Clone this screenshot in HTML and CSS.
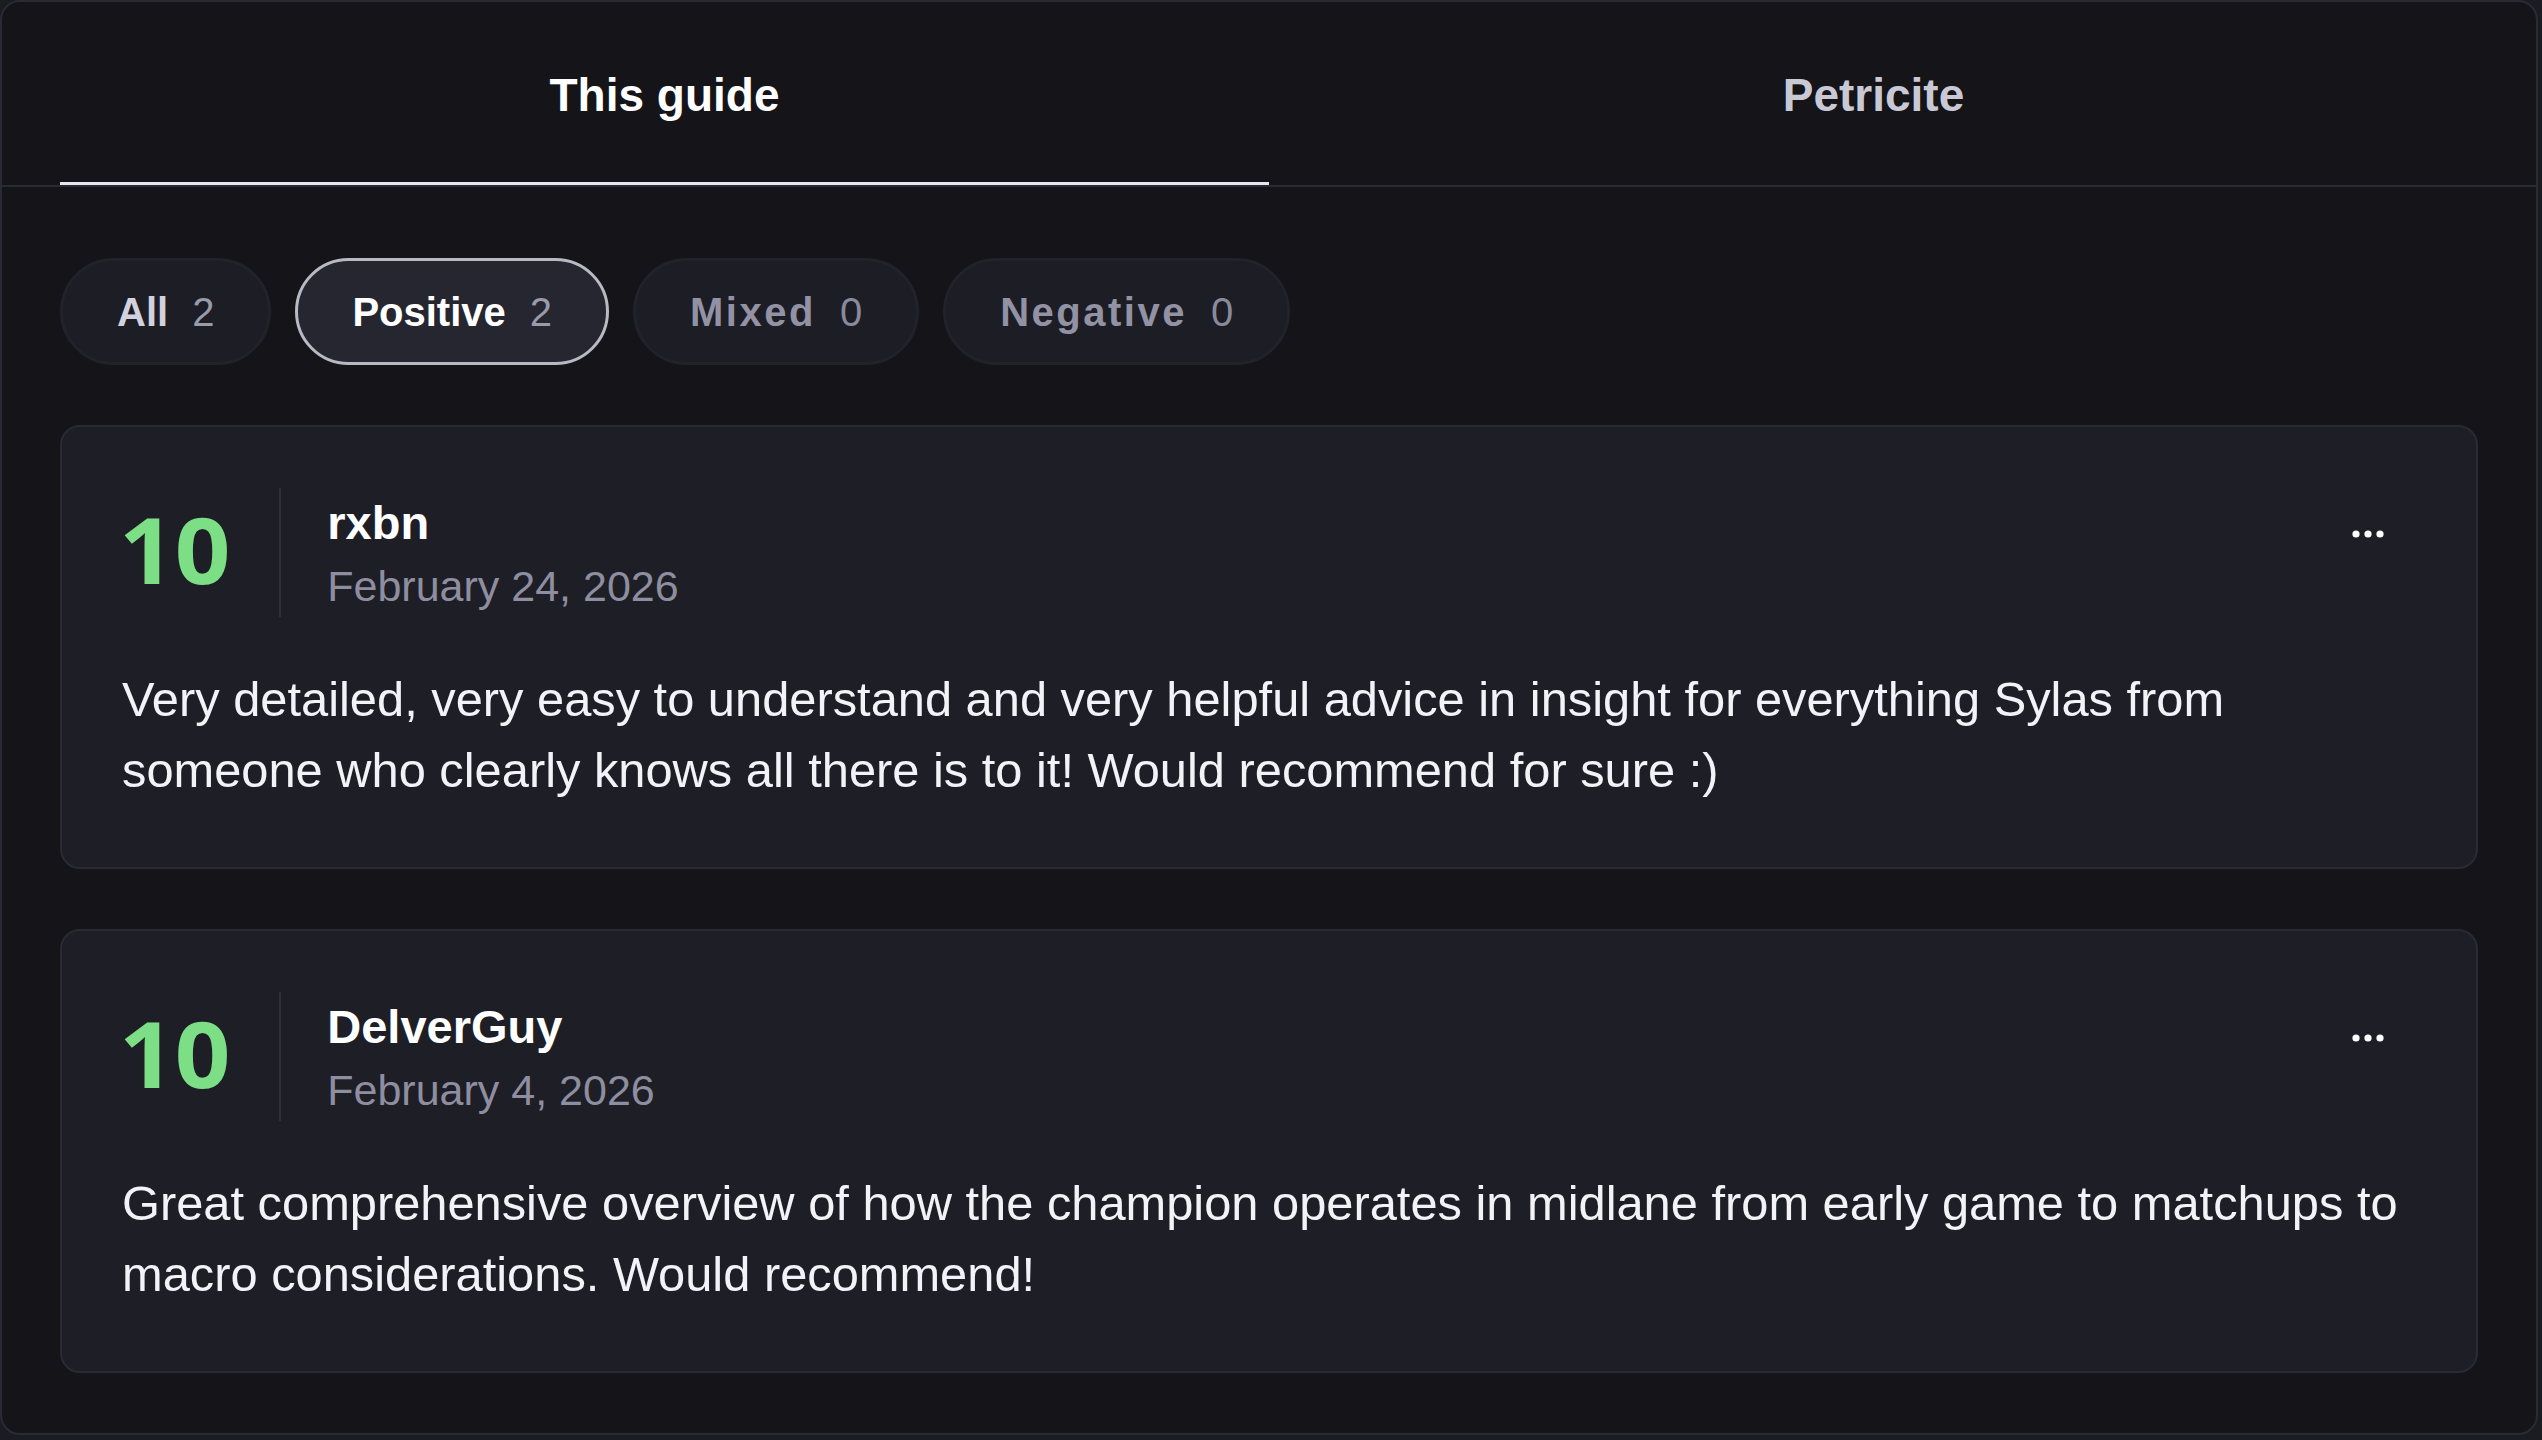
FILE: index.html
```html
<!DOCTYPE html>
<html lang="en">
<head>
<meta charset="utf-8">
<title>Reviews</title>
<link rel="stylesheet" href="styles.css">
</head>
<body>
<div class="panel">
  <nav class="tabs">
    <button class="tab active">This guide</button>
    <button class="tab">Petricite</button>
  </nav>
  <div class="content">
    <div class="filters">
      <button class="chip chip-all"><span class="chip-label">All</span><span class="chip-count">2</span></button>
      <button class="chip active"><span class="chip-label">Positive</span><span class="chip-count">2</span></button>
      <button class="chip muted"><span class="chip-label">Mixed</span><span class="chip-count">0</span></button>
      <button class="chip muted"><span class="chip-label">Negative</span><span class="chip-count">0</span></button>
    </div>
    <div class="reviews">
      <article class="review">
        <header class="review-head">
          <div class="score">10</div>
          <div class="sep"></div>
          <div class="author">
            <div class="name">rxbn</div>
            <div class="date">February 24, 2026</div>
          </div>
          <button class="menu" aria-label="More options">
            <svg width="32" height="8" viewBox="0 0 32 8"><circle cx="4" cy="4" r="3.6" fill="#fff"/><circle cx="16" cy="4" r="3.6" fill="#fff"/><circle cx="28" cy="4" r="3.6" fill="#fff"/></svg>
          </button>
        </header>
        <p class="review-body">Very detailed, very easy to understand and very helpful advice in insight for everything Sylas from someone who clearly knows all there is to it! Would recommend for sure :)</p>
      </article>
      <article class="review">
        <header class="review-head">
          <div class="score">10</div>
          <div class="sep"></div>
          <div class="author">
            <div class="name">DelverGuy</div>
            <div class="date">February 4, 2026</div>
          </div>
          <button class="menu" aria-label="More options">
            <svg width="32" height="8" viewBox="0 0 32 8"><circle cx="4" cy="4" r="3.6" fill="#fff"/><circle cx="16" cy="4" r="3.6" fill="#fff"/><circle cx="28" cy="4" r="3.6" fill="#fff"/></svg>
          </button>
        </header>
        <p class="review-body">Great comprehensive overview of how the champion operates in midlane from early game to matchups to macro considerations. Would recommend!</p>
      </article>
    </div>
  </div>
</div>
</body>
</html>
```

FILE: styles.css
```css
* { box-sizing: border-box; }
html, body { margin: 0; padding: 0; }
body {
  background: #1b1b22;
  font-family: "Liberation Sans", Arial, sans-serif;
  width: 2542px;
  height: 1440px;
  overflow: hidden;
}
button { font-family: inherit; cursor: pointer; }

.panel {
  width: 2538px;
  background: #141419;
  border: 2px solid #2a2a35;
  border-radius: 20px;
}

.tabs {
  display: flex;
  padding: 0 58px;
  border-bottom: 2px solid #2a2a35;
}
.tab {
  flex: 1;
  height: 183px;
  padding: 6px 0 0;
  background: none;
  border: none;
  border-bottom: 3px solid transparent;
  font-size: 46px;
  font-weight: 700;
  line-height: 1.15;
  color: #c9c9d6;
}
.tab.active {
  color: #ffffff;
  border-bottom-color: #e6e6ec;
}

.content {
  padding: 71px 58px 60px;
}

.filters {
  display: flex;
  gap: 24px;
}
.chip {
  display: flex;
  align-items: center;
  gap: 24px;
  height: 107px;
  padding: 0 54px;
  border: 3px solid #22222b;
  border-radius: 999px;
  background: #1d1d25;
  font-size: 40px;
  line-height: 46px;
}
.chip-label { font-weight: 700; color: #d2d2de; }
.chip-count { font-weight: 400; color: #9a9aab; }
.chip.active {
  background: #262631;
  border-color: #b9b9c4;
}
.chip.active .chip-label { color: #ffffff; }
.chip.muted .chip-label { color: #9292a4; letter-spacing: 2.5px; }
.chip.muted .chip-count { color: #8a8a9c; }

.reviews {
  margin-top: 60px;
  display: flex;
  flex-direction: column;
  gap: 60px;
}
.review {
  background: #1e1e26;
  border: 2px solid #2a2a34;
  border-radius: 20px;
  padding: 61px 60px;
}
.review-head {
  display: flex;
  align-items: center;
  height: 129px;
}
.score {
  font-family: "Noto Sans", sans-serif;
  font-size: 92px;
  font-weight: 700;
  line-height: 1;
  color: #7ddf85;
  padding-bottom: 8px;
  margin-left: -3px;
  margin-right: 55px;
  transform: scaleX(1.06);
  transform-origin: left center;
}
.sep {
  width: 2px;
  align-self: stretch;
  background: #30303a;
}
.author {
  margin-left: 46px;
}
.name {
  font-size: 47px;
  font-weight: 700;
  line-height: 66px;
  color: #ffffff;
}
.date {
  font-size: 43px;
  line-height: 60px;
  color: #8e8ea0;
}
.menu {
  margin-left: auto;
  margin-right: 2px;
  align-self: flex-start;
  width: 92px;
  height: 92px;
  padding: 0;
  background: none;
  border: none;
  display: flex;
  align-items: center;
  justify-content: center;
}
.review-body {
  margin: 47px 0 0;
  font-size: 48.8px;
  line-height: 71px;
  color: #f2f2f7;
}
```
